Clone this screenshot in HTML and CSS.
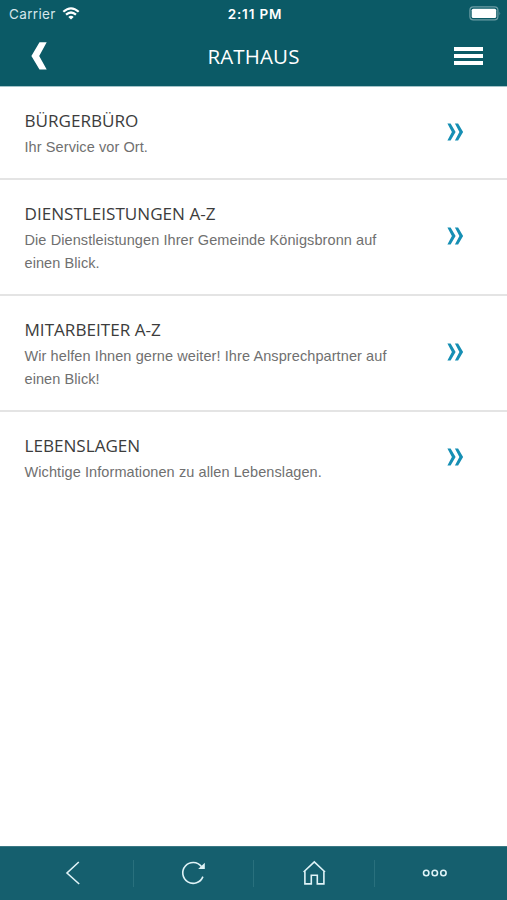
FILE: index.html
```html
<!DOCTYPE html>
<html lang="de">

<head>
    <meta charset="UTF-8">
    <meta name="viewport" content="width=device-width, initial-scale=1.0">
    <title>Rathaus</title>
    <link rel="stylesheet" href="styles.css">
</head>

<body>
    <header class="header">
        <div class="status">
            <div class="status-left">
                <span class="carrier">Carrier</span>
                <svg class="wifi" width="18" height="13" viewBox="0 0 18 13">
                    <path d="M1.3 4.8 Q9 -2.2 16.7 4.8" />
                    <path d="M4 7.7 Q9 3.3 14 7.7" />
                    <path class="dot" d="M6.3 9.9 Q9 7.8 11.7 9.9 L9 12.5 Z" />
                </svg>
            </div>
            <span class="time">2:11 PM</span>
            <svg class="battery" width="33" height="15" viewBox="0 0 33 15">
                <rect class="shell" x="0.9" y="0.9" width="28" height="13" rx="3.4" />
                <rect class="charge" x="2.7" y="2.7" width="24.5" height="9.4" rx="1.6" />
                <path class="cap" d="M30.5 5.5 Q32 7.4 30.5 9.5 Z" />
            </svg>
        </div>
        <div class="titlebar">
            <svg class="back" width="17" height="28" viewBox="0 0 17 28">
                <path d="M8.5 0.3 H15.7 L8.2 14 L15.7 27.4 H8.5 L0.4 14 Z" />
            </svg>
            <h1>RATHAUS</h1>
            <div class="burger"><span></span><span></span><span></span></div>
        </div>
    </header>

    <main class="list">
        <a class="item">
            <div class="text">
                <h2>BÜRGERBÜRO</h2>
                <p>Ihr Service vor Ort.</p>
            </div>
            <svg class="arrow" width="17" height="18" viewBox="0 0 17 18">
                <path d="M0.4 0.5 H3.6 L8.6 9 L3.6 17.5 H0.4 L4.9 9 Z M7.9 0.5 H11.1 L16.1 9 L11.1 17.5 H7.9 L12.4 9 Z" />
            </svg>
        </a>
        <a class="item">
            <div class="text">
                <h2>DIENSTLEISTUNGEN A-Z</h2>
                <p>Die Dienstleistungen Ihrer Gemeinde Königsbronn auf<br>einen Blick.</p>
            </div>
            <svg class="arrow" width="17" height="18" viewBox="0 0 17 18">
                <path d="M0.4 0.5 H3.6 L8.6 9 L3.6 17.5 H0.4 L4.9 9 Z M7.9 0.5 H11.1 L16.1 9 L11.1 17.5 H7.9 L12.4 9 Z" />
            </svg>
        </a>
        <a class="item">
            <div class="text">
                <h2>MITARBEITER A-Z</h2>
                <p>Wir helfen Ihnen gerne weiter! Ihre Ansprechpartner auf<br>einen Blick!</p>
            </div>
            <svg class="arrow" width="17" height="18" viewBox="0 0 17 18">
                <path d="M0.4 0.5 H3.6 L8.6 9 L3.6 17.5 H0.4 L4.9 9 Z M7.9 0.5 H11.1 L16.1 9 L11.1 17.5 H7.9 L12.4 9 Z" />
            </svg>
        </a>
        <a class="item">
            <div class="text">
                <h2>LEBENSLAGEN</h2>
                <p>Wichtige Informationen zu allen Lebenslagen.</p>
            </div>
            <svg class="arrow" width="17" height="18" viewBox="0 0 17 18">
                <path d="M0.4 0.5 H3.6 L8.6 9 L3.6 17.5 H0.4 L4.9 9 Z M7.9 0.5 H11.1 L16.1 9 L11.1 17.5 H7.9 L12.4 9 Z" />
            </svg>
        </a>
    </main>

    <nav class="toolbar">
        <div class="tool">
            <svg width="26" height="26" viewBox="0 0 26 26">
                <path d="M18.8 2 L7 13 L19.2 24" />
            </svg>
        </div>
        <div class="tool">
            <svg width="26" height="26" viewBox="0 0 26 26">
                <path d="M22.9 16.6 A10.4 10.4 0 1 1 21.4 6.6" />
                <path class="fill" d="M24.8 2.8 V9 H18.2 Z" />
            </svg>
        </div>
        <div class="tool">
            <svg width="26" height="26" viewBox="0 0 26 26">
                <path d="M2.6 12 L13.3 1.8 L24 12 M3.9 11 V23.9 H10.3 V15.2 H16.3 V23.9 H22.9 V11" />
            </svg>
        </div>
        <div class="tool">
            <svg width="26" height="26" viewBox="0 0 26 26">
                <circle cx="4.2" cy="13" r="2.7" />
                <circle cx="12.8" cy="13" r="2.7" />
                <circle cx="21.4" cy="13" r="2.7" />
            </svg>
        </div>
    </nav>
</body>

</html>
```
FILE: styles.css
```css
:root {
    --header-color: #0b5a66;
    --toolbar-color: #155f6e;
    --arrow-color: #168fb4;
}

* {
    box-sizing: border-box;
}

body {
    margin: 0;
    height: 100vh;
    display: flex;
    flex-direction: column;
    background: #fff;
    font-family: "Liberation Sans", Arial, sans-serif;
    overflow: hidden;
}

.header {
    height: 87px;
    background: var(--header-color);
    border-bottom: 1px solid #a3c4c9;
    color: #fff;
}

.status {
    display: grid;
    grid-template-columns: 1fr auto 1fr;
    align-items: center;
    height: 27px;
    padding: 0 6px 0 9px;
    font-family: Inter, sans-serif;
    font-size: 13.5px;
}

.status-left {
    display: flex;
    align-items: center;
    gap: 6px;
}

.carrier {
    color: #d5e6ea;
    letter-spacing: 0.35px;
}

.wifi {
    fill: none;
    stroke: #fff;
    stroke-width: 2.2;
}

.wifi .dot {
    fill: #fff;
    stroke: none;
}

.time {
    font-weight: 600;
    font-size: 13.5px;
    letter-spacing: 0.85px;
}

.battery {
    justify-self: end;
    margin-right: -1px;
    fill: #fff;
}

.battery .shell {
    fill: none;
    stroke: #6d9da5;
    stroke-width: 1.2;
}

.battery .cap {
    fill: #6d9da5;
}

.titlebar {
    display: grid;
    grid-template-columns: 1fr auto 1fr;
    align-items: center;
    height: 58px;
    padding: 0 24px;
}

.back {
    margin-left: 7px;
    fill: #fff;
}

h1 {
    margin: 0;
    font: 400 20.5px/28px "Open Sans", sans-serif;
    letter-spacing: 0.15px;
}

.burger {
    justify-self: end;
    display: flex;
    flex-direction: column;
    gap: 3px;
    width: 29px;
}

.burger span {
    height: 4.3px;
    background: #fff;
}

.list {
    flex: 1;
}

.item {
    display: flex;
    justify-content: space-between;
    align-items: center;
    padding: 21px 43px 18.8px 24.5px;
    border-bottom: 2px solid #e4e4e4;
}

.item:last-child {
    border-bottom: none;
}

h2 {
    margin: 0 0 3px;
    color: #3c3c3c;
    font: 400 17.1px/25px "Open Sans", sans-serif;
}

p {
    margin: 0;
    color: #707070;
    font-size: 14.5px;
    letter-spacing: 0.09px;
    line-height: 23.2px;
    white-space: nowrap;
}

.arrow {
    margin-bottom: 4px;
    fill: var(--arrow-color);
}

.toolbar {
    display: grid;
    grid-template-columns: repeat(4, 120.5px);
    align-items: center;
    height: 54px;
    padding: 0 0 1px 13px;
    background: var(--toolbar-color);
    border-top: 1px solid #3b7884;
}

.tool {
    display: flex;
    justify-content: center;
    align-items: center;
    height: 27px;
    border-right: 1px solid #29707d;
}

.tool:last-child {
    border-right: none;
}

.tool svg {
    fill: none;
    stroke: #dff3f7;
    stroke-width: 1.6;
}

.tool .fill {
    fill: #dff3f7;
    stroke: none;
}
```
